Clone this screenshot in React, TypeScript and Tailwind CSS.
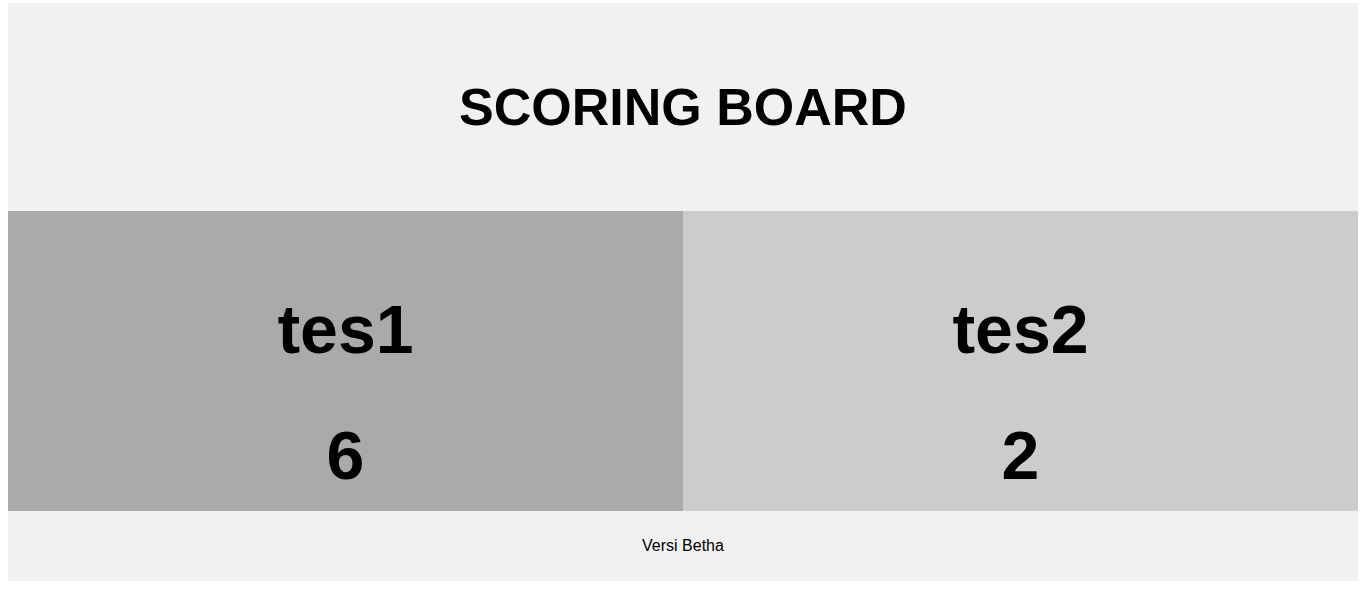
import React from 'react';

const teams = [
  { name: 'tes1', score: 6, bg: 'bg-[#aaaaaa]' },
  { name: 'tes2', score: 2, bg: 'bg-[#cccccc]' },
];

export default function App() {
  return (
    <div className="min-h-[591px] bg-white px-2 pt-[3px] font-['Liberation_Sans',Arial,sans-serif] text-black">
      <header className="flex h-[208px] items-center justify-center bg-[#f1f1f1]">
        <h1 className="text-[52px] font-bold leading-none">SCORING BOARD</h1>
      </header>
      <div className="flex h-[300px]">
        {teams.map((t) => (
          <div key={t.name} className={`flex flex-1 flex-col items-center gap-[46px] pt-[78px] ${t.bg}`}>
            <div className="text-[68px] font-bold leading-[80px]">{t.name}</div>
            <div className="text-[68px] font-bold leading-[80px]">{t.score}</div>
          </div>
        ))}
      </div>
      <footer className="flex h-[70px] items-center justify-center bg-[#f1f1f1] text-base">
        Versi Betha
      </footer>
    </div>
  );
}
